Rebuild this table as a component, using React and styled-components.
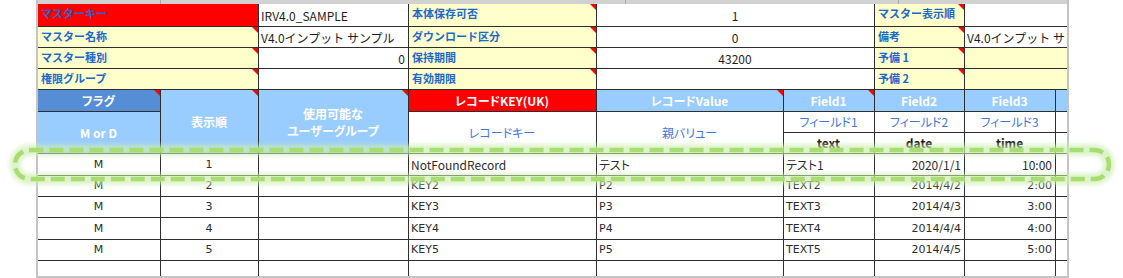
import React from 'react';
import styled, { createGlobalStyle, css } from 'styled-components';

const GlobalStyle = createGlobalStyle`
  body {
    margin: 0;
    background: #fff;
  }
`;

const COLS = '122px 97px 149px 187px 186px 90px 89px 90px 11px';
const ROWS = '22px 20px 20px 20px 21px 20px 20px 21px 20px 20px 21px 20px 15px';

const Page = styled.div`
  position: relative;
  width: 1123px;
  height: 278px;
  overflow: hidden;
  padding-left: 36px;
  box-sizing: border-box;
  font-family: "Noto Sans CJK JP", "Noto Sans", sans-serif;
`;

const Sheet = styled.div`
  width: 1029px;
  border-left: 2px solid #c4c4c4;
  border-right: 2px solid #c4c4c4;
  border-bottom: 2px solid #c4c4c4;
`;

const Strip = styled.div`
  display: grid;
  grid-template-columns: 122px 464px 272px 1fr;
  gap: 1px;
  height: 4px;
  background: #a8a8a8;
  & > span {
    background: #d2d2d2;
  }
`;

const Grid = styled.div`
  display: grid;
  grid-template-columns: ${COLS};
  grid-template-rows: ${ROWS};
  gap: 1px;
  background: #2e2e2e;
`;

const ALIGN = { left: 'flex-start', center: 'center', right: 'flex-end' };

const Cell = styled.div`
  position: relative;
  grid-column: ${p => p.$col};
  grid-row: ${p => p.$row};
  background: ${p => p.$bg || '#fff'};
  display: flex;
  align-items: center;
  justify-content: ${p => ALIGN[p.$align || 'left']};
  text-align: ${p => p.$align || 'left'};
  padding: 0 3px 0 2px;
  overflow: hidden;
  white-space: nowrap;
  ${p => p.$note && css`
    &::after {
      content: '';
      position: absolute;
      top: 0;
      right: 0;
      border-top: 6px solid #ff0000;
      border-left: 6px solid transparent;
    }
  `}
`;

const Label = styled(Cell)`
  align-items: flex-start;
  padding: 1px 3px 0 3px;
  color: #1c68cc;
  font-weight: 700;
  font-size: 11px;
  line-height: 16px;
`;

const Value = styled(Cell)`
  color: #1e1e1e;
  font-size: 12px;
  line-height: 16px;
  padding-top: 2px;
`;

const Head = styled(Cell)`
  color: #fff;
  font-weight: 700;
  font-size: 12px;
  line-height: 17px;
  white-space: normal;
  font-feature-settings: "palt";
`;

const SubHead = styled(Cell)`
  color: #3f78d6;
  font-size: 12px;
  line-height: 14px;
  font-feature-settings: "palt";
`;

const TypeHead = styled(Cell)`
  color: #111;
  font-weight: 700;
  font-size: 12px;
  line-height: 14px;
  padding-bottom: 1px;
`;

const Data = styled(Cell)`
  color: #2d2d2d;
  font-family: ${p => (p.$jp
    ? '"Noto Sans CJK JP", "Noto Sans", sans-serif'
    : '"DejaVu Sans", "Noto Sans CJK JP", sans-serif')};
  font-size: ${p => (p.$jp ? '12px' : '11px')};
  line-height: 14px;
  font-feature-settings: "palt";
`;

const Highlight = styled.svg`
  position: absolute;
  left: 4px;
  top: 138px;
  pointer-events: none;
`;

const RED = '#ff0000';
const YELLOW = '#ffffcc';
const BLUE = '#558ed5';
const LIGHT = '#99ccff';

const topRows = [
  ['マスターキー', 'IRV4.0_SAMPLE', 'left', '本体保存可否', '1', 'マスター表示順', '', '#fff'],
  ['マスター名称', 'V4.0インプット サンプル', 'left', 'ダウンロード区分', '0', '備考', 'V4.0インプット サンプル', '#fff'],
  ['マスター種別', '0', 'right', '保持期間', '43200', '予備 1', '', YELLOW],
  ['権限グループ', '', 'left', '有効期限', '', '予備 2', '', YELLOW],
];

const dataRows = [
  { jp: true, key: 'NotFoundRecord', val: 'テスト', text: 'テスト1', date: '2020/1/1', time: '10:00' },
  { key: 'KEY2', val: 'P2', text: 'TEXT2', date: '2014/4/2', time: '2:00' },
  { key: 'KEY3', val: 'P3', text: 'TEXT3', date: '2014/4/3', time: '3:00' },
  { key: 'KEY4', val: 'P4', text: 'TEXT4', date: '2014/4/4', time: '4:00' },
  { key: 'KEY5', val: 'P5', text: 'TEXT5', date: '2014/4/5', time: '5:00' },
];

const fields = [
  ['Field1', 'フィールド1', 'text', 6, true],
  ['Field2', 'フィールド2', 'date', 7, false],
  ['Field3', 'フィールド3', 'time', 8, false],
];

export default function App() {
  return (
    <Page>
      <GlobalStyle />
      <Sheet>
        <Strip>
          <span />
          <span />
          <span />
          <span />
        </Strip>
        <Grid>
          {topRows.map(([l1, v1, a1, l2, v2, l3, v3, bg3], i) => {
            const row = i + 1;
            return (
              <React.Fragment key={l1}>
                <Label $col="1 / 3" $row={row} $bg={i === 0 ? RED : YELLOW} $note={i > 0}>{l1}</Label>
                <Value $col="3" $row={row} $align={a1}>{v1}</Value>
                <Label $col="4" $row={row} $bg={YELLOW} $note>{l2}</Label>
                <Value $col="5 / 7" $row={row} $align="center">{v2}</Value>
                <Label $col="7" $row={row} $bg={YELLOW} $note>{l3}</Label>
                <Value $col="8 / 10" $row={row} $bg={bg3}>{v3}</Value>
              </React.Fragment>
            );
          })}

          <Head $col="1" $row="5" $bg={BLUE} $align="center" $note>フラグ</Head>
          <Head $col="1" $row="6 / 8" $bg={LIGHT} $align="center">M or D</Head>
          <Head $col="2" $row="5 / 8" $bg={LIGHT} $align="center" $note>表示順</Head>
          <Head $col="3" $row="5 / 8" $bg={LIGHT} $align="center" $note>
            使用可能な<br />ユーザーグループ
          </Head>
          <Head $col="4" $row="5" $bg={RED} $align="center">レコードKEY(UK)</Head>
          <SubHead $col="4" $row="6 / 8" $align="center">レコードキー</SubHead>
          <Head $col="5" $row="5" $bg={LIGHT} $align="center" $note>レコードValue</Head>
          <SubHead $col="5" $row="6 / 8" $align="center">親バリュー</SubHead>
          {fields.map(([name, sub, type, col, note]) => (
            <React.Fragment key={name}>
              <Head $col={col} $row="5" $bg={LIGHT} $align="center" $note={note}>{name}</Head>
              <SubHead $col={col} $row="6" $align="center">{sub}</SubHead>
              <TypeHead $col={col} $row="7" $align="center">{type}</TypeHead>
            </React.Fragment>
          ))}
          <Head $col="9" $row="5" $bg={LIGHT} />
          <Cell $col="9" $row="6" />
          <Cell $col="9" $row="7" />

          {dataRows.map((d, i) => {
            const row = i + 8;
            return (
              <React.Fragment key={d.key}>
                <Data $col="1" $row={row} $align="center">M</Data>
                <Data $col="2" $row={row} $align="center">{i + 1}</Data>
                <Data $col="3" $row={row} />
                <Data $col="4" $row={row} $jp={d.jp}>{d.key}</Data>
                <Data $col="5" $row={row} $jp={d.jp}>{d.val}</Data>
                <Data $col="6" $row={row} $jp={d.jp}>{d.text}</Data>
                <Data $col="7" $row={row} $jp={d.jp} $align="right">{d.date}</Data>
                <Data $col="8" $row={row} $jp={d.jp} $align="right">{d.time}</Data>
                <Data $col="9" $row={row} />
              </React.Fragment>
            );
          })}
          {[1, 2, 3, 4, 5, 6, 7, 8, 9].map(c => (
            <Cell key={c} $col={c} $row="13" />
          ))}
        </Grid>
      </Sheet>

      <Highlight width="1120" height="60" viewBox="0 0 1120 60">
        <defs>
          <filter id="glow" x="-5%" y="-50%" width="110%" height="200%">
            <feGaussianBlur stdDeviation="2" />
          </filter>
        </defs>
        <rect x="11" y="12" width="1094" height="29" rx="14.5"
          fill="none" stroke="#cdeeb2" strokeWidth="11" opacity="0.7" filter="url(#glow)" />
        <rect x="11" y="12" width="1094" height="29" rx="14.5"
          fill="none" stroke="#a8dd70" strokeWidth="4.5" strokeDasharray="14 6" />
      </Highlight>
    </Page>
  );
}
